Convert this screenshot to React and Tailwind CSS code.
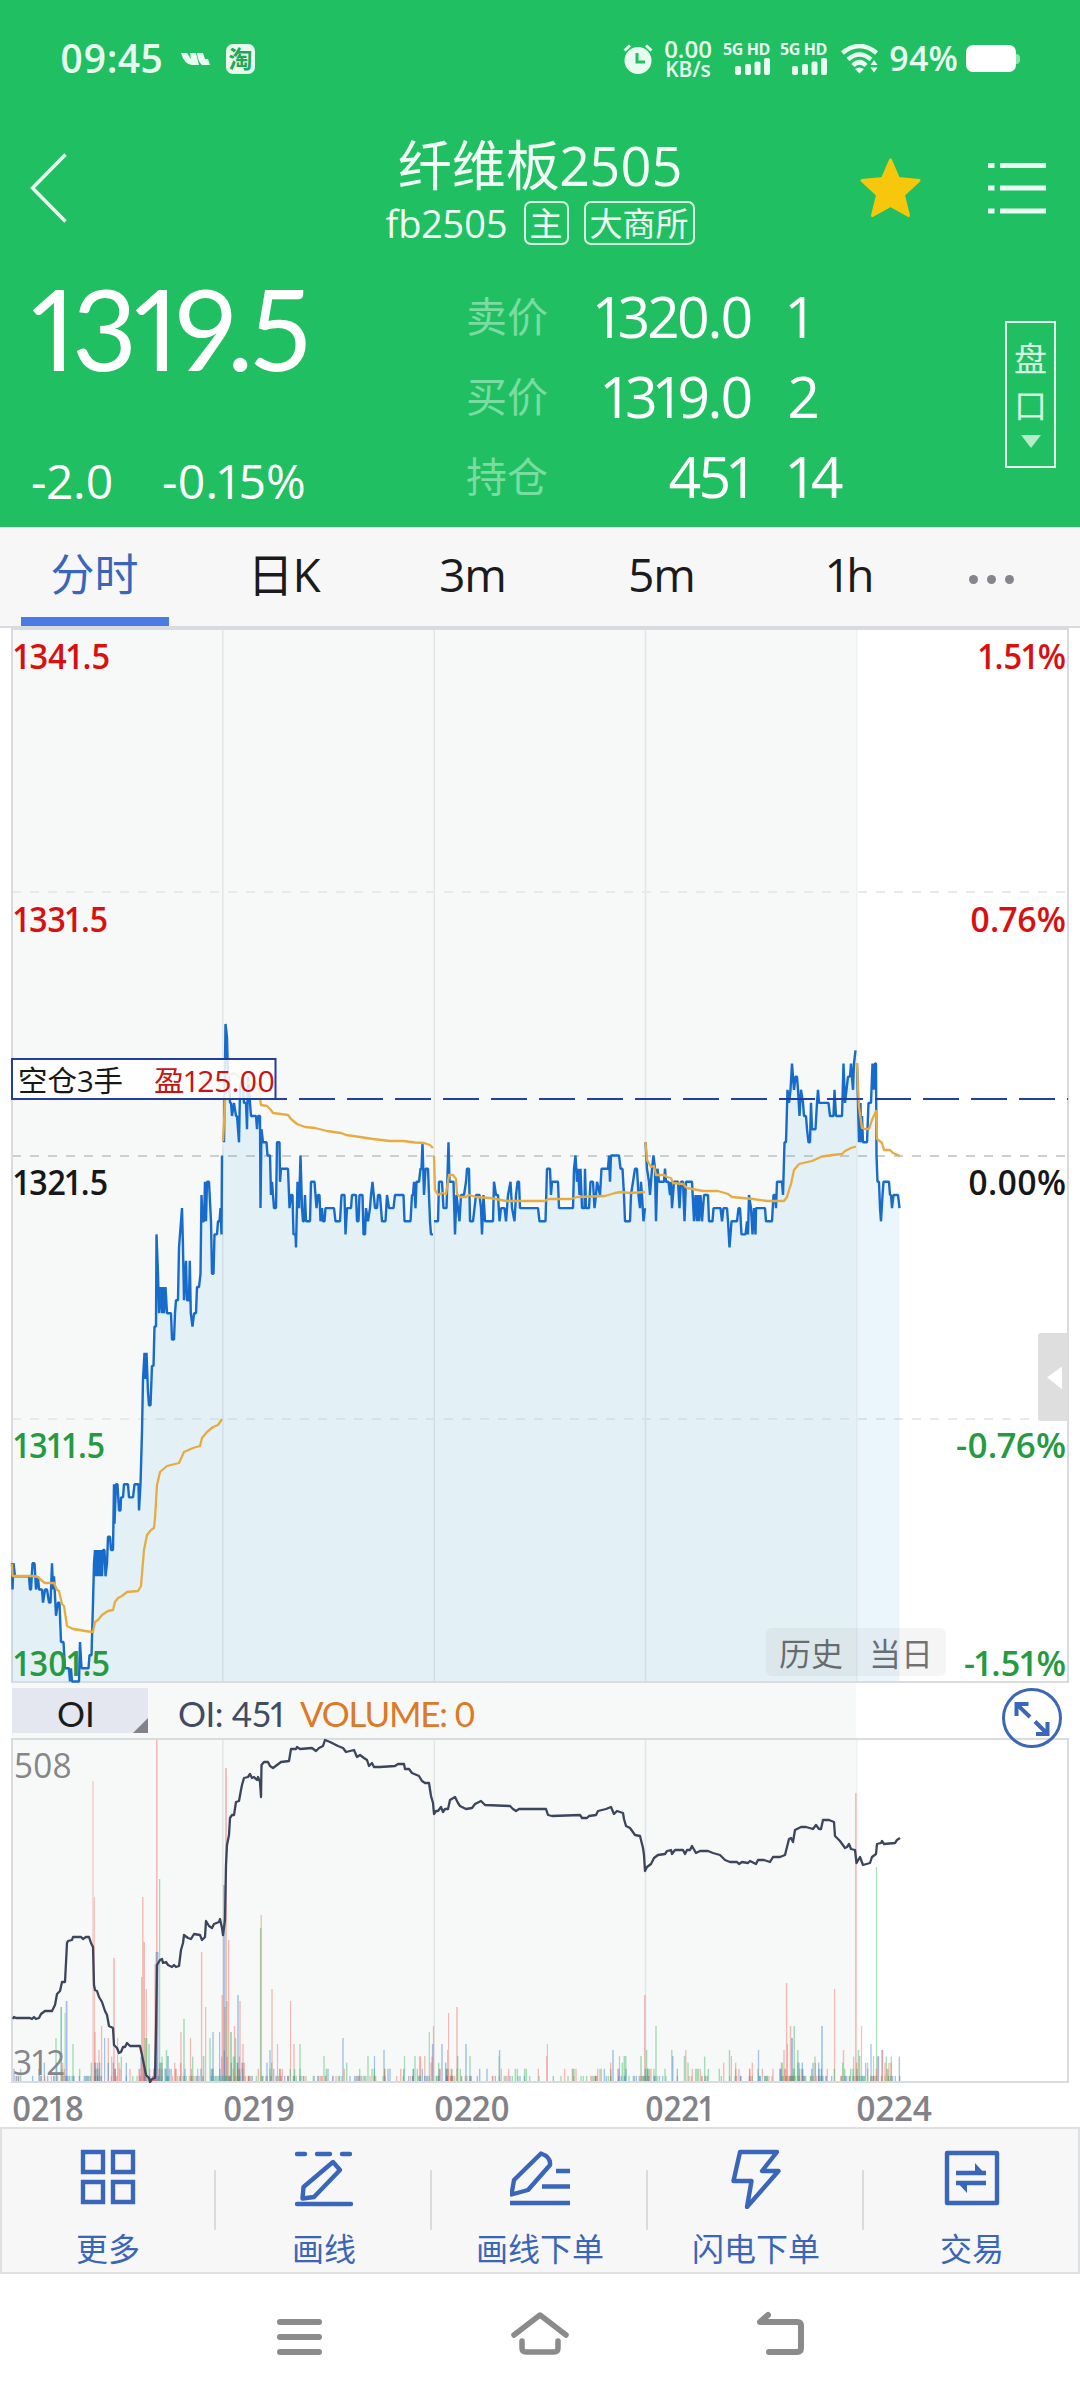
import { memo } from 'react'

// Each session: [x, ticks from the settlement price] pairs, one tick = 0.5
const SESSIONS = [
  '12,-31 12.5,-33 13.5,-31 15,-32 29,-32 30,-33 31,-33 32.5,-31 34.5,-31 36,-33 38,-32 39,-33 42,-33 43,-34 45,-33 47,-33 49,-34 50.5,-34 52,-31 53,-33 54,-32 56,-35 58,-34 59.5,-34 61,-37 63.5,-37 65,-39 69,-39 70,-40 71,-39 72,-40 79,-40 80,-37 81.5,-39 88.5,-39 89.5,-38 91.5,-38 93,-34 94,-31 95,-30 96,-32 97,-30 98,-32 99,-30 100,-32 101,-30 102,-32 103,-30 104.5,-30 105.5,-32 107,-31 108,-29 110,-29 111,-30 113,-30 114,-25 114.5,-28 116,-25 117.5,-25 119,-27 120.5,-27 121,-26 123,-26 124,-25 128,-25 129,-26 133,-26 134.5,-25 138.5,-25 139,-27 140.5,-25 142,-21 143,-17 144.5,-15 145.5,-17 146.5,-15 148,-18 149,-19 150.5,-19 152,-16 153.5,-16 154.5,-13 156,-13 156.5,-6 158,-9 159,-12 160.5,-10 162,-12 163,-10 164,-12 165.5,-10 167,-12 171,-12 172,-14 174,-14 175,-12 176,-11 178,-11 179,-7 182,-4 183,-7 184,-11 186,-8 187,-11 189,-11 189.8,-8 190.8,-12 192.5,-13 194,-12 196,-12 197,-10 199,-10 200.5,-9 201.5,-3 202.5,-5 204,-5 205,-2 206,-5 207,-2 209,-2 211,-5 212,-9 213.5,-9 214.5,-6 217,-6 218,-5 219.5,-5 220.5,-4 221.5,-6 222,0',
  '224,1 225.5,10 227,9 228,6 229,6 230,4 231,4 232,3 234,4 236,3 237,3 239,1 240,5 242,6 244,4 246,4 247,2 248,6 251,3 256,3 257,2 258,3 260,3 260.5,-4 261.5,2 263,1 266.5,1 267.5,0 270,0 271,-3 272,-2 274,-4 276,-4 277,1 279.5,1 280,-2 281,-1 288,-1 289.5,-4 291,-3 292.5,-3 293.5,-6 295.5,-6 296,-7 297.5,-2 299,-4 300.5,0 302,-4 303,-5 304,-5 305,-3 306,-5 310,-5 311,-2 314.5,-2 316.5,-4 318,-3 319.5,-3 320.5,-5 322,-4 323,-5 324.5,-5 325.5,-4 334,-4 335.5,-5 340,-5 341.5,-3 344.5,-3 345.5,-6 347,-4 351,-4 352,-3 356,-3 357,-5 358.5,-5 359.5,-3 362.5,-3 363.5,-6 365,-6 366,-4 368,-5 370,-4 371,-3 372.5,-2 375,-4 377,-4 378,-3 380,-3 382,-5 385.5,-5 387,-3 389,-4 393.5,-4 395,-3 403.5,-3 404.5,-5 410.5,-5 412,-3 413,-3 414,-2 415.5,-4 416.5,-2 419,-2 420.5,-1 421.5,-1 422.5,1 424,-3 425.5,-1 428,-1 430,-5 431,-6 433,-6',
  '434,-5 438,-5 439,-2 442,-2 443.5,-4 446.5,-4 448.5,1 449.5,-2 453.5,-2 455,-6 456.5,-3 458,-4 459.5,-5 461,-3 464,-3 466,-2 467,-1 469,-1 470,-5 473,-5 474.5,-4 476,-3 479.5,-3 481,-4 482,-6 483.5,-3 485,-5 493,-5 494,-2 496,-3 498,-3 499.5,-5 501,-4 504.5,-4 506,-5 508,-3 510.5,-2 512,-4 514.5,-5 516,-3 517.5,-2 519,-2 520,-4 538,-4 539.5,-5 545.5,-5 547,-1 550,-1 551,-3 552,-2 558,-2 559,-4 573,-4 574,-1 575.5,0 577,-2 578,-1 579.5,-3 580.5,-1 582,-4 584.5,-4 585,-1 586,-4 589,-4 590.5,-2 593,-2 594.5,-4 596,-3 597,-2 600,-3 601.5,-1 608,-1 609,0 610,-2 611,0 619,0 620.5,-1 622.5,-1 624,-3 625,-5 630,-5 631,-3 633,-2 635,-1 637,-1 638.5,-3 640,-4 641,-2 642,-3 643.5,-5 645,-4',
  '645.5,1 647,-1 649,-2 650,-3 652,-1 653.5,0 655,-1 656,-5 657.5,-1 659,-2 664,-2 665,-1 666,-2 668.5,-2 670,-3 671,-2 672,-4 674,-2 678,-2 679.5,-4 681,-2 683,-2 684.5,-5 686,-2 692,-2 694,-5 695.5,-3 697,-5 698,-3 699,-5 700.5,-3 702,-5 704,-3 708,-3 709,-5 712.5,-5 713.5,-4 720.5,-4 722,-5 723.5,-4 725,-4 727,-4 728,-5 729.5,-7 731.5,-5 737,-5 738.5,-4 740,-4 741.5,-6 745.5,-6 747,-5 748,-6 749,-3 751,-4 752.5,-6 754,-4 755.5,-6 756,-4 765,-4 766,-5 772,-5 773.5,-3 775,-3 776,-4 777,-2 782,-2 783,-3 784.5,1 786,1 787.5,5 789,4 790.5,5 792,7 793,6 794,5 795.5,6 797,6 798,5 799.5,3 801,5 803,4 804,3 806,3 807,2 808.5,1 810,1 811,4 812,2 815.5,2 817,4 818,5 819,4 828.5,4 830,3 833.5,3 834.5,5 836,3 842,3 843.5,7 845,4 846.5,5 848,6 850,6 851,7 853,5 854,7 855.5,8',
  '857,7 858,4 859,1 860.5,4 861,1 862,3 863,1 867,1 868.5,4 871,4 872.5,7 874,5 875,7 876,7 876.5,0 877.5,-2 879,-2 880,-4 881,-5 882.5,-3 883.5,-2 889,-2 890,-3 891,-3 892,-4 893.5,-3 898,-3 899.5,-4',
]

const AVERAGES = [
  '12,1564 12.5,1576 33,1576 38,1577 41,1580 45,1583 54,1583 57,1590 59,1591 62,1604 64,1606 67,1626 73,1629 80,1630 85,1631 93,1632 95,1622 98,1620 102,1615 108,1611 113,1610 115,1602 118,1598 122,1596 127,1592 138,1591 141,1586 144,1550 147,1535 151,1530 154,1528 155,1518 157,1485 160,1472 167,1466 179,1463 184,1452 193,1448 200,1446 202,1438 207,1432 213,1427 218,1425 222,1419',
  '223,1141 225,1103 228,1074 236,1074 240,1078 244,1083 258,1084 261,1105 267,1106 271,1110 273,1113 288,1115 291,1119 297,1124 305,1127 315,1128 327,1131 341,1133 346,1135 360,1137 373,1139 390,1141 403,1141 415,1142.5 424,1143 430,1145 433,1148',
  '434,1156 435,1190 438,1195 442,1193 446,1194 449,1175 453,1175 456,1179 457,1194 460,1197 466,1197 469,1195 476,1197 490,1198 506,1201 545,1201 548,1199 571,1199 577,1197 605,1196 615,1193 621,1192 630,1193 645,1192',
  '645.5,1142 647,1160 651,1167 654,1166 656,1175 664,1175 667,1177 671,1178 673,1183 683,1184 687,1188 703,1191 718,1191 728,1194 732,1197 753,1199 767,1201 784,1201 787,1197 789,1190 791,1184 794,1170 799,1164 812,1161 822,1156.5 833,1155 842,1154 845,1151 851,1148 856,1146.5',
  '857,1063 859,1107 862,1128 865,1129 869,1129 872,1120 876,1111 877,1139 882,1143 884,1150 890,1150 893,1153 900,1156',
]

const OPEN_INTEREST =
  '13,2019 14,2017 16,2018 30,2018 32,2019 34,2017 36,2019 39,2018 41,2014 45,2011 52,2011 55,2005 57,1994 60,1991 62,1982 65,1982 67,1943 68,1941 72,1940 73,1937 81,1937 83,1939 86,1937 89,1937 91,1943 93,1947 94,1985 95,1990 97,1991 99,1997 102,2002 105,2011 107,2015 109,2026 113,2028 114,2045 117,2048 119,2053 121,2052 123,2047 125,2047 127,2043 130,2046 140,2046 142,2055 146,2075 149,2078 150,2082 152,2079 155,2078 156,2030 157,1965 160,1960 162,1959 163,1963 166,1962 168,1965 172,1967 174,1965 176,1967 179,1966 181,1950 183,1943 184,1935 188,1938 191,1939 194,1934 200,1935 202,1940 205,1937 206,1921 209,1926 212,1928 214,1924 219,1922 220,1919 222,1928 223,1935 225,1920 226,1865 227,1845 229,1835 230,1818 232,1815 234,1815 236,1802 239,1801 241,1790 242,1785 244,1778 248,1777 250,1774 252,1778 254,1777 257,1780 258,1777 260,1782 261,1797 261.5,1765 264,1762 268,1762 270,1766 273,1768 277,1765 281,1762 289,1761 291,1749 296,1749 297,1747 300,1749 312,1748 316,1751 319,1748 323,1746 325,1740 330,1742 338,1746 343,1748 346,1752 350,1751 354,1750 357,1757 360,1755 364,1758 367,1760 369,1766 372,1763 374,1767 380,1767 395,1766 398,1764 404,1764 405,1769 409,1769 412,1773 419,1776 422,1781 425,1783 429,1783 431,1796 433,1803 434,1814 436,1811 438,1811 441,1807 443,1812 445,1809 448,1809 450,1800 455,1797 458,1803 460,1806 466,1809 472,1808 475,1804 481,1801 485,1805 510,1806 513,1809 516,1811 519,1809 546,1809 548,1815 552,1816 580,1815 582,1818 587,1818 589,1816 596,1815 598,1811 606,1809 611,1807 614,1814 617,1811 623,1813 624,1819 626,1826 630,1828 635,1835 640,1836 643,1848 644,1855 645,1871 647,1867 651,1864 654,1858 658,1855 665,1854 667,1851 671,1850 672,1854 675,1850 683,1850 685,1854 687,1850 690,1850 692,1846 696,1853 700,1851 708,1851 713,1853 720,1855 725,1860 730,1862 737,1862 739,1864 742,1862 748,1863 750,1861 756,1864 758,1860 764,1860 770,1862 773,1857 780,1857 785,1855 787,1847 789,1839 791,1838 793,1842 795,1830 801,1827 806,1827 813,1829 816,1825 819,1829 821,1829 823,1820 829,1820 834,1822 835,1836 840,1841 845,1848 847,1847 849,1844 851,1849 855,1850 856.5,1863 860,1857 863,1865 870,1863 872,1857 876,1854 877,1844 881,1843 882,1841 884,1844 895,1843 897,1840 900,1838'

const RED = 'rgba(240,90,80,0.4)'
const GREEN = 'rgba(60,185,100,0.45)'
const BLUE = 'rgba(60,125,205,0.45)'

// Large volume bars: [x, top, colour, width]
const SPIKES = [
  [93, 1781, RED, 1], [94.3, 1897, RED, 1], [95, 2032, RED, 1.5], [156.8, 1740, RED, 1.6], [142.8, 1897, RED, 1.4],
  [144.2, 1942, RED, 1.6], [141.6, 1977, RED, 1.2], [146.3, 1989, RED, 1.2], [114, 1958, RED, 1.6], [159.6, 1879, GREEN, 1.3],
  [157, 1952, BLUE, 3], [155, 1964, RED, 1.4], [226, 1768, RED, 1.8], [224, 1885, BLUE, 1.8], [228.7, 1940, RED, 1.4],
  [201.6, 1952, RED, 1.4], [205.6, 2007, RED, 1.2], [61, 2007, GREEN, 1.2], [61.3, 2007, BLUE, 1], [66.6, 2001, BLUE, 1.8],
  [65, 2013, GREEN, 1], [56, 2038, GREEN, 1.4], [73, 2044, GREEN, 1.4], [184, 2019, GREEN, 1.5], [181, 2032, RED, 1.4],
  [190.5, 2038, RED, 1.2], [213, 2032, BLUE, 1.4], [210, 2038, GREEN, 1.4], [219.6, 2032, BLUE, 1.2], [222.2, 1995, RED, 1.4],
  [227, 2001, GREEN, 1.5], [225, 2007, RED, 1.5], [231, 2032, GREEN, 2], [234.5, 2026, RED, 1.4], [235.5, 2038, GREEN, 1.4],
  [238, 1995, BLUE, 1.5], [240, 2001, RED, 1.4], [243, 2044, RED, 1.4], [260.6, 1928, GREEN, 1.4], [261.2, 1915, RED, 1.3],
  [272, 1989, RED, 1.4], [290.5, 2001, RED, 1.2], [294, 2044, RED, 1.4], [300, 2044, GREEN, 1.4], [277.5, 2044, RED, 1.2],
  [270, 2050, BLUE, 1.3], [101.6, 2026, RED, 1.3], [104.6, 2038, BLUE, 1.2], [108.3, 2038, RED, 1.4], [117.6, 2038, RED, 1.2],
  [99, 2050, RED, 1.4], [146, 2038, GREEN, 3], [149, 2044, GREEN, 1.5], [166.5, 2050, GREEN, 1.5], [168, 2056, BLUE, 1.8],
  [203.6, 2056, GREEN, 1.6], [343, 2038, BLUE, 1.4], [324, 2056, GREEN, 1.4], [429.3, 2032, GREEN, 1.2], [433.5, 2026, RED, 1.3],
  [432.6, 2044, BLUE, 1.4], [442, 2044, BLUE, 1.5], [448.6, 2013, RED, 1.2], [447.5, 2050, RED, 1], [457, 2007, RED, 1.5],
  [457.7, 2056, GREEN, 1.5], [466, 2044, BLUE, 1.5], [470, 2056, GREEN, 1.4], [499.6, 2050, BLUE, 1.4], [499, 2056, GREEN, 1],
  [547.4, 2044, RED, 1.2], [546.6, 2056, RED, 1], [613, 2050, BLUE, 1.5], [619.5, 2056, GREEN, 1.2], [625, 2056, GREEN, 3],
  [644.8, 1995, RED, 1.5], [646.6, 2050, GREEN, 1.4], [641, 2056, GREEN, 1.5], [656, 2026, GREEN, 1.4], [671.8, 2050, GREEN, 1.4],
  [672.8, 2056, BLUE, 1.4], [684.5, 2056, GREEN, 1.5], [685.8, 2050, RED, 1.4], [384, 2050, BLUE, 1.4], [368, 2056, GREEN, 1.4],
  [374.5, 2056, BLUE, 1.2], [404.5, 2056, GREEN, 1.2], [415, 2056, GREEN, 1.4], [420.5, 2056, RED, 1.3], [424.8, 2056, RED, 1.3],
  [729.5, 2050, GREEN, 1.4], [731.4, 2056, RED, 1.2], [758.5, 2050, BLUE, 1.3], [784, 2050, RED, 1.4], [786.6, 1983, RED, 1.4],
  [787.5, 2044, RED, 1], [790.5, 2026, RED, 1.4], [792, 2038, BLUE, 2], [794.2, 2026, GREEN, 1.5], [797.8, 2050, GREEN, 1.5],
  [822, 2026, BLUE, 1.6], [834.6, 1989, RED, 1.3], [843.5, 2050, RED, 1.4], [855.8, 1793, RED, 1.5], [858.5, 2050, GREEN, 1.6],
  [859.6, 2056, GREEN, 1.6], [861.5, 2026, RED, 1.3], [871, 2044, BLUE, 1.4], [873.5, 2056, GREEN, 1.2], [876.5, 1867, GREEN, 1.2],
  [878.5, 2056, BLUE, 1.5], [882, 2050, BLUE, 1.4], [882.6, 2050, RED, 1.4],
]

// Low bars along the baseline: [from, to, bars, tallest in lots]
const NOISE = [
  [14, 50, 14, 3], [50, 90, 24, 3.4], [90, 120, 26, 4.4], [120, 140, 10, 3.6], [140, 180, 46, 4.6], [180, 222, 30, 4],
  [222, 246, 36, 6.4], [246, 300, 38, 4], [300, 360, 32, 3.2], [360, 430, 36, 3.6], [430, 480, 38, 3.6], [480, 530, 20, 2.2],
  [530, 570, 6, 3], [570, 610, 22, 3], [610, 660, 38, 3.6], [660, 710, 20, 4], [715, 782, 36, 3.4], [782, 822, 50, 4],
  [822, 850, 16, 3], [850, 868, 20, 4], [868, 900, 28, 4],
]

const buildNoise = () => {
  let seed = 41
  const rand = () => {
    seed = (seed * 16807) % 2147483647
    return seed / 2147483647
  }
  const bars = []
  NOISE.forEach(([from, to, count, tallest]) => {
    for (let i = 0; i < count; i++) {
      const x = from + rand() * (to - from)
      const lots = 1 + Math.floor(rand() * rand() * tallest)
      const color = [RED, GREEN, BLUE][Math.floor(rand() * 3)]
      bars.push([Math.round(x * 3) / 3, 2082 - lots * 6.1 - (lots > 1 ? 1 : 0), color, 1.4])
    }
  })
  return bars
}

const VOLUME = [...SPIKES, ...buildNoise()]
const DAY_LINES = [222.8, 434.3, 645.5, 856.8]

const toPrice = (session) =>
  session
    .split(' ')
    .map((p) => {
      const [x, ticks] = p.split(',').map(Number)
      return `${x},${(1155.5 - ticks * 13.15).toFixed(1)}`
    })
    .join(' ')

const PRICE_LINES = SESSIONS.map(toPrice)

const LEFT_LABELS = [
  ['1341.5', 668.5, 96, '#d9100f'],
  ['1331.5', 931.5, 94, '#d9100f'],
  ['1321.5', 1194.5, 94, '#171717'],
  ['1311.5', 1457.5, 91, '#259a41'],
  ['1301.5', 1675.5, 96, '#259a41'],
]

const RIGHT_LABELS = [
  ['1.51%', 668.5, 87, '#d9100f'],
  ['0.76%', 931.5, 96, '#d9100f'],
  ['0.00%', 1194.5, 98, '#171717'],
  ['-0.76%', 1457.5, 110, '#259a41'],
  ['-1.51%', 1675.5, 102, '#259a41'],
]

function StatusBar() {
  return (
    <div className="flex h-[117px] items-center px-[60px] text-[#e9fbf0]">
      <span className="w-[105px] text-[39px] font-semibold tracking-[0.3px]">09:45</span>
      <svg className="ml-[16px] h-[14px] w-[30px]" viewBox="0 0 30 14" fill="currentColor">
        <path d="M0 1h6l4 6-1-6h6l3 12h-7Q3 12 0 1z M16 1h6l2 6h3l2 6h-8q-4-3-5-12z" />
      </svg>
      <span className="ml-[15px] flex h-[30px] w-[29px] items-center justify-center rounded-[7px] bg-[#e6fbee] text-[24px] leading-none font-bold text-[#20a855]">
        淘
      </span>

      <div className="ml-auto flex items-center">
        <svg className="h-[30px] w-[30px]" viewBox="0 0 30 30" fill="none">
          <circle cx="15" cy="16.5" r="13.5" fill="currentColor" />
          <path d="M1.5 6.5 7 1.5M28.5 6.5 23 1.5" stroke="currentColor" strokeWidth="3" />
          <path d="M14 9v9h8" stroke="#20c062" strokeWidth="3" />
        </svg>
        <div className="ml-[9px] w-[52px] text-center font-semibold">
          <div className="text-[24px] leading-[20px] tabular-nums">0.00</div>
          <div className="text-[21px] leading-[20px]">KB/s</div>
        </div>
        {[0, 1].map((sim) => (
          <div key={sim} className="ml-[9px] w-[48px]">
            <div className="text-[16px] leading-[16px] font-bold tracking-[-0.4px] whitespace-nowrap">5G HD</div>
            <svg className="mt-px ml-[12px] h-[18px] w-[36px]" viewBox="0 0 36 18" fill="currentColor">
              <rect x="0" y="8" width="6" height="9" rx="2" />
              <rect x="10" y="6" width="6" height="11" rx="2" />
              <rect x="19.5" y="3.5" width="6" height="13.5" rx="2" />
              <rect x="29" y="0" width="6" height="17" rx="2" />
            </svg>
          </div>
        ))}
        <svg className="ml-[13px] h-[30px] w-[37px]" viewBox="0 0 37 30" fill="none" stroke="currentColor">
          <path d="M1.5 9Q18.5-5 35.5 9" strokeWidth="4.5" />
          <path d="M7 15.5Q18.5 5.5 30 15.5" strokeWidth="4.5" />
          <path d="M12 21.5Q18.5 15 25 21.5" strokeWidth="4.5" />
          <path d="M14 25q4.5-3 9 0l-4.5 4.5z" fill="currentColor" stroke="none" />
          <path d="M29.5 21l3.5-5 3.5 5zM29.5 23.5l3.5 5 3.5-5z" fill="currentColor" stroke="none" />
        </svg>
        <span className="ml-[11px] w-[70px] text-[34px] font-semibold whitespace-nowrap">94%</span>
        <div className="ml-[7px] h-[27px] w-[50px] rounded-[7px] bg-white" />
        <div className="h-[10px] w-[4px] rounded-r bg-[#8fe3b1]" />
      </div>
    </div>
  )
}

function TitleBar() {
  return (
    <div className="grid h-[143px] grid-cols-[1fr_auto_1fr] items-center">
      <svg className="-mt-[2px] ml-[30px] h-[70px] w-[38px]" viewBox="0 0 38 70" fill="none" stroke="#e9fbf0" strokeWidth="3.5">
        <path d="M35.5 1.5 2.5 35l33 33.5" />
      </svg>
      <div className="flex flex-col items-center pt-[3px] text-[#f1fdf5]">
        <div className="h-[60px] text-[54px] leading-[60px] whitespace-nowrap">纤维板2505</div>
        <div className="mt-[6px] flex h-[44px] items-center">
          <span className="text-[38px] leading-[44px]">fb2505</span>
          <span className="ml-[16px] flex h-[44px] w-[45px] items-center justify-center rounded-[7px] border-2 border-[#d9f7e4] text-[33px] leading-none">
            主
          </span>
          <span className="ml-[15px] flex h-[44px] w-[111px] items-center justify-center rounded-[7px] border-2 border-[#d9f7e4] text-[33px] leading-none">
            大商所
          </span>
        </div>
      </div>
      <div className="-mt-[2px] flex items-center justify-end pr-[34px]">
        <svg className="h-[62px] w-[63px]" viewBox="0 0 63 62">
          <path
            d="M31.5 3 39.5 21.5 60 23.5 44.5 38 49.5 58.5 31.5 48.5 13.5 58.5 18.5 38 3 23.5 23.5 21.5z"
            fill="#f6c70a"
            stroke="#f6c70a"
            strokeWidth="3"
            strokeLinejoin="round"
          />
        </svg>
        <svg className="ml-[66px] h-[52px] w-[58px]" viewBox="0 0 58 52" stroke="#eafbf1" strokeWidth="5">
          <path d="M0 3.5h6.5M12 3.5h46M0 26h6.5M12 26h46M0 49h6.5M12 49h46" />
        </svg>
      </div>
    </div>
  )
}

const QUOTES = [
  ['卖价', '1320.0', '1'],
  ['买价', '1319.0', '2'],
  ['持仓', '451', '14'],
]

function QuotePanel() {
  return (
    <div className="flex h-[267px] text-white">
      <div className="w-[466px] pt-[13px] pl-[31px]">
        <div className='h-[110px] font-["Lato"] text-[112px] leading-[110px] tracking-[-3px]'>1319.5</div>
        <div className="mt-[68px] flex h-[60px] items-center text-[48px] leading-[60px] whitespace-nowrap">
          <span className="w-[131px]">-2.0</span>
          <span>-0.15%</span>
        </div>
      </div>
      <div className="pt-[17px]">
        {QUOTES.map(([label, price, lots]) => (
          <div key={label} className="flex h-[80px] items-center">
            <span className="w-[85px] text-[41px] text-[#79dca0]">{label}</span>
            <span className="w-[200px] text-right text-[57px] tracking-[-2.4px]">{price}</span>
            <span className="ml-[37px] text-[57px] tracking-[-2px]">{lots}</span>
          </div>
        ))}
      </div>
      <div className="mt-[61px] mr-[24px] ml-auto flex h-[147px] w-[51px] flex-col items-center border-2 border-[#e3faec] pt-[12px] text-[33px] leading-[47px] text-[#d5f5e1]">
        <span>盘</span>
        <span>口</span>
        <svg className="mt-[6px] h-[13px] w-[20px]" viewBox="0 0 20 13" fill="#b5ecca">
          <path d="M0 0h20L10 13z" />
        </svg>
      </div>
    </div>
  )
}

function PeriodTabs() {
  return (
    <div className="flex h-[101px] border-b-2 border-[#d9dadd] bg-[#f7f7f8] text-[46px] text-[#1b1b1d]">
      {['分时', '日K', '3m', '5m', '1h'].map((tab, i) => (
        <div key={tab} className="flex w-[189px] flex-col items-center">
          <span className={i === 0 ? 'h-[90px] text-[44px] leading-[95px] text-[#3a66b9]' : 'h-[90px] leading-[94px] tracking-[-1px]'}>
            {tab}
          </span>
          {i === 0 && <span className="h-[9px] w-[148px] bg-[#4b7be2]" />}
        </div>
      ))}
      <div className="flex items-center gap-[9px] pt-[6px] pl-[24px]">
        <span className="size-[9px] rounded-full bg-[#85858b]" />
        <span className="size-[9px] rounded-full bg-[#85858b]" />
        <span className="size-[9px] rounded-full bg-[#85858b]" />
      </div>
    </div>
  )
}

const PriceChart = memo(function PriceChart() {
  return (
    <svg className="block h-[1055px] w-[1080px] overflow-visible" viewBox="0 628 1080 1055">
      <rect x="12" y="628" width="844.5" height="1055" fill="#f6f9f8" />
      {/* Grid */}
      <g fill="none">
        {DAY_LINES.map((x) => (
          <path key={x} d={`M${x} 628V1682`} stroke={x > 800 ? '#f0f1f1' : '#e3e6e6'} strokeWidth="1.5" />
        ))}
        <path d="M12 892H1067M12 1419H1067" stroke="#e7eaea" strokeWidth="2" strokeDasharray="9 9" />
        <path d="M12 1156H1067" stroke="#cbcfce" strokeWidth="2" strokeDasharray="9 9" />
      </g>
      <path d="M12 629H1068V1682H12z" fill="none" stroke="#d9dbde" strokeWidth="2" />

      {/* Price */}
      <polygon points={`12,1681 ${PRICE_LINES.join(' ')} 899.5,1681`} fill="rgba(60,170,230,0.1)" />
      {PRICE_LINES.map((points, i) => (
        <polyline key={i} points={points} fill="none" stroke="#176bca" strokeWidth="2.4" strokeLinejoin="bevel" />
      ))}
      {AVERAGES.map((points, i) => (
        <polyline key={i} points={points} fill="none" stroke="#e6ac42" strokeWidth="2.3" strokeLinejoin="round" />
      ))}

      {/* Open position */}
      <path d="M11 1099H1068" stroke="#223f9f" strokeWidth="2.2" strokeDasharray="36 12" />
      <rect x="12" y="1059" width="263.5" height="40" fill="#fff" fillOpacity="0.84" stroke="#223f9f" strokeWidth="2" />
      <text x="18" y="1092" fontSize="29" fill="#171717" textLength="105" lengthAdjust="spacingAndGlyphs">空仓3手</text>
      <text x="154" y="1092" fontSize="29" fill="#c81414" textLength="121" lengthAdjust="spacingAndGlyphs">盈125.00</text>

      <g fontSize="35" fontWeight="600">
        {LEFT_LABELS.map(([text, y, width, color]) => (
          <text key={text} x="14" y={y} fill={color} textLength={width} lengthAdjust="spacingAndGlyphs">{text}</text>
        ))}
        {RIGHT_LABELS.map(([text, y, width, color]) => (
          <text key={text} x={1066 - width} y={y} fill={color} textLength={width} lengthAdjust="spacingAndGlyphs">{text}</text>
        ))}
      </g>

      {/* History / today switch */}
      <rect x="766" y="1628" width="180" height="48" rx="6" fill="rgba(110,120,120,0.07)" />
      <g fontSize="32" fill="#000" fillOpacity="0.54">
        <text x="779" y="1665.5">历史</text>
        <text x="869" y="1665.5">当日</text>
      </g>

      {/* Drawer handle */}
      <path d="M1068 1333h-27q-3 0-3 3v82q0 3 3 3h27z" fill="#dedede" />
      <path d="M1047 1377.5 1062 1366.5V1389z" fill="#fff" />
    </svg>
  )
})

function IndicatorBar() {
  return (
    <div className='relative flex h-[55px] items-start bg-linear-to-r from-[#f6f9f8] from-[856px] to-white to-[856px] font-["Lato"] text-[35px] leading-[50px]'>
      <div className="h-[55px] w-[12px] bg-white" />
      <div className="relative mt-[5px] h-[45px] w-[136px] bg-[#e4e6f0] pr-[8px] text-center text-[#1b1b1d]">
        OI
        <svg className="absolute right-0 bottom-0 size-[15px]" viewBox="0 0 15 15" fill="#828288">
          <path d="M15 0v15H0z" />
        </svg>
      </div>
      <span className="mt-[5px] ml-[30px] w-[122px] tracking-[-0.5px] whitespace-nowrap text-[#414b63]">OI: 451</span>
      <span className="mt-[5px] tracking-[-1.2px] whitespace-nowrap text-[#dc7a28]">
        VOLUME: <span className="tabular-nums">0</span>
      </span>
      <svg className="absolute top-[4px] right-[17px] z-10 size-[62px]" viewBox="0 0 62 62" fill="none" stroke="#3c66b8" strokeWidth="3">
        <circle cx="31" cy="31" r="28.5" />
        <path d="M29 30 16 17.5M15.5 29V17H27.5M34 34.5 46 46.5M35 47H46.5V35" strokeWidth="4" />
      </svg>
    </div>
  )
}

const VolumeChart = memo(function VolumeChart() {
  return (
    <svg className="block h-[389px] w-[1080px] overflow-visible" viewBox="0 1738 1080 389">
      <rect x="12" y="1738" width="844.5" height="345" fill="#f6f9f8" />
      {DAY_LINES.map((x) => (
        <path key={x} d={`M${x} 1739V2082`} stroke={x > 800 ? '#f0f1f1' : '#e3e6e6'} strokeWidth="1.5" />
      ))}
      {VOLUME.map(([x, top, color, width], i) => (
        <rect key={i} x={x - width / 2} y={top} width={width} height={2082 - top} fill={color} />
      ))}
      <path d="M12 1739H1068V2082H12z" fill="none" stroke="#d9dbde" strokeWidth="2" />
      <polyline points={OPEN_INTEREST} fill="none" stroke="#3b455c" strokeWidth="2.3" strokeLinejoin="round" />
      <g fontSize="35" fill="#85858a">
        <text x="14" y="1777.5" textLength="58" lengthAdjust="spacingAndGlyphs">508</text>
        <text x="13" y="2075" textLength="52" lengthAdjust="spacingAndGlyphs">312</text>
      </g>
      <g fontSize="35" fontWeight="600" fill="#828288">
        <text x="12" y="2120.5" textLength="72" lengthAdjust="spacingAndGlyphs">0218</text>
        <text x="223" y="2120.5" textLength="72" lengthAdjust="spacingAndGlyphs">0219</text>
        <text x="434" y="2120.5" textLength="76" lengthAdjust="spacingAndGlyphs">0220</text>
        <text x="645" y="2120.5" textLength="69" lengthAdjust="spacingAndGlyphs">0221</text>
        <text x="856" y="2120.5" textLength="76" lengthAdjust="spacingAndGlyphs">0224</text>
      </g>
    </svg>
  )
})

const ACTIONS = [
  {
    label: '更多',
    icon: <path d="M5 5h20v20H5zM35 5h20v20H35zM5 35h20v20H5zM35 35h20v20H35z" />,
  },
  {
    label: '画线',
    icon: (
      <>
        <path d="M3 7h8M23 7h13M48 7h8" strokeLinecap="round" />
        <path d="M3 57h54" strokeLinecap="round" />
        <path d="M39 15 46 23 20 50 8.5 51.5 9.5 40z" strokeLinejoin="round" />
      </>
    ),
  },
  {
    label: '画线下单',
    icon: (
      <>
        <path d="M0 56h60M46 24h14M32 39.5h28" />
        <path d="M31 6.5Q41 10 40 18L18 43 1.5 47.5 4 33z" strokeLinejoin="round" />
      </>
    ),
  },
  {
    label: '闪电下单',
    icon: <path d="M14 5H51L36 24H52.5L21 60 25.5 34H7.5z" strokeLinejoin="round" />,
  },
  {
    label: '交易',
    icon: (
      <>
        <path d="M5 6h50v50H5z" strokeLinejoin="round" />
        <path d="M14 26h30M14 36h30" />
        <path d="M33 16 44 28H33zM25 46 14 34h11z" fill="currentColor" stroke="none" />
      </>
    ),
  },
]

function ActionBar() {
  return (
    <div className="flex h-[147px] bg-[#f7f7f8] text-[#3a66b9] outline-2 -outline-offset-2 outline-[#dfe0e2]">
      {ACTIONS.map(({ label, icon }, i) => (
        <div key={label} className="relative flex w-[216px] flex-col items-center pt-[20px]">
          <svg className="h-[62px] w-[60px]" viewBox="0 0 60 62" fill="none" stroke="currentColor" strokeWidth="4.4">
            {icon}
          </svg>
          <span className="mt-[20px] text-[32px] leading-[40px]">{label}</span>
          {i < 4 && <span className="absolute top-[43px] right-0 h-[60px] w-[2px] bg-[#dadbdd]" />}
        </div>
      ))}
    </div>
  )
}

function SystemNav() {
  return (
    <div className="flex h-[126px] justify-center gap-[180px] pt-[33px]">
      <svg className="size-[60px]" viewBox="0 0 60 60" fill="none" stroke="#8b8b8b" strokeWidth="6" strokeLinecap="round">
        <path d="M10 15h39M10 30h39M10 45h39" />
      </svg>
      <svg className="size-[60px]" viewBox="0 0 60 60" fill="none" stroke="#8b8b8b" strokeWidth="5.5" strokeLinecap="round" strokeLinejoin="round">
        <path d="M4 28 30 8 56 28M12 34v7q0 4 4 4h28q4 0 4-4v-7" />
      </svg>
      <svg className="size-[60px]" viewBox="0 0 60 60" fill="none" stroke="#8b8b8b" strokeWidth="6" strokeLinecap="round" strokeLinejoin="round">
        <path d="M18 8 10 15H47q4 0 4 4v22q0 4-4 4H19" />
      </svg>
    </div>
  )
}

export default function App() {
  return (
    <div className='h-[2400px] w-[1080px] overflow-hidden bg-white font-["Open_Sans","Noto_Sans_CJK_SC",sans-serif] proportional-nums'>
      <header className="h-[527px] bg-[#20c062]">
        <StatusBar />
        <TitleBar />
        <QuotePanel />
      </header>
      <PeriodTabs />
      <PriceChart />
      <IndicatorBar />
      <VolumeChart />
      <ActionBar />
      <SystemNav />
    </div>
  )
}
